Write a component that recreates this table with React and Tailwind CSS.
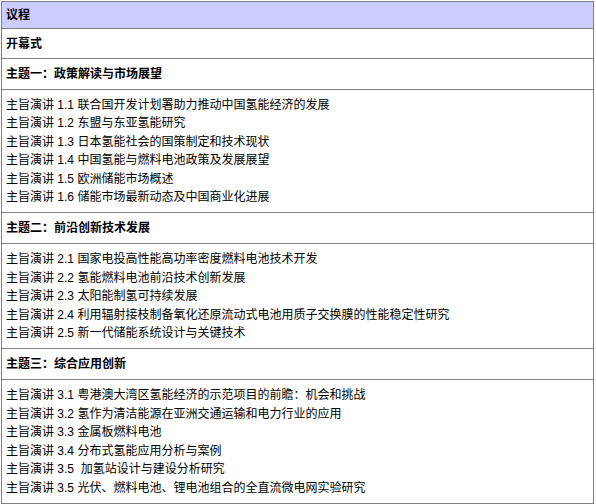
import React from "react";

const agenda = [
  {
    title: "主题一：政策解读与市场展望",
    talks: [
      ["1.1", "联合国开发计划署助力推动中国氢能经济的发展"],
      ["1.2", "东盟与东亚氢能研究"],
      ["1.3", "日本氢能社会的国策制定和技术现状"],
      ["1.4", "中国氢能与燃料电池政策及发展展望"],
      ["1.5", "欧洲储能市场概述"],
      ["1.6", "储能市场最新动态及中国商业化进展"],
    ],
  },
  {
    title: "主题二：前沿创新技术发展",
    talks: [
      ["2.1", "国家电投高性能高功率密度燃料电池技术开发"],
      ["2.2", "氢能燃料电池前沿技术创新发展"],
      ["2.3", "太阳能制氢可持续发展"],
      ["2.4", "利用辐射接枝制备氧化还原流动式电池用质子交换膜的性能稳定性研究"],
      ["2.5", "新一代储能系统设计与关键技术"],
    ],
  },
  {
    title: "主题三：综合应用创新",
    talks: [
      ["3.1", "粤港澳大湾区氢能经济的示范项目的前瞻：机会和挑战"],
      ["3.2", "氢作为清洁能源在亚洲交通运输和电力行业的应用"],
      ["3.3", "金属板燃料电池"],
      ["3.4", "分布式氢能应用分析与案例"],
      ["3.5", " 加氢站设计与建设分析研究"],
      ["3.5", "光伏、燃料电池、锂电池组合的全直流微电网实验研究"],
    ],
  },
];

const cell = "border border-[#808080] px-[4px] align-middle";

export default function App() {
  return (
    <div
      className="bg-white pt-px pl-px text-[12px] text-black"
      style={{ fontFamily: '"Liberation Sans", "Noto Sans CJK SC", sans-serif' }}
    >
      <table className="border-collapse w-[593px]">
        <tbody>
          <tr>
            <td className={`${cell} h-[27px] bg-[#ccccff] font-bold`}>议程</td>
          </tr>
          <tr>
            <td className={`${cell} h-[30px] font-bold`}>开幕式</td>
          </tr>
          {agenda.map((section) => (
            <React.Fragment key={section.title}>
              <tr>
                <td className={`${cell} h-[31px] font-bold`}>{section.title}</td>
              </tr>
              <tr>
                <td className={`${cell} py-[6px]`}>
                  {section.talks.map(([num, name], i) => (
                    <div key={i} className="leading-[18.4px] whitespace-pre">
                      主旨演讲 {num} {name}
                    </div>
                  ))}
                </td>
              </tr>
            </React.Fragment>
          ))}
        </tbody>
      </table>
    </div>
  );
}
